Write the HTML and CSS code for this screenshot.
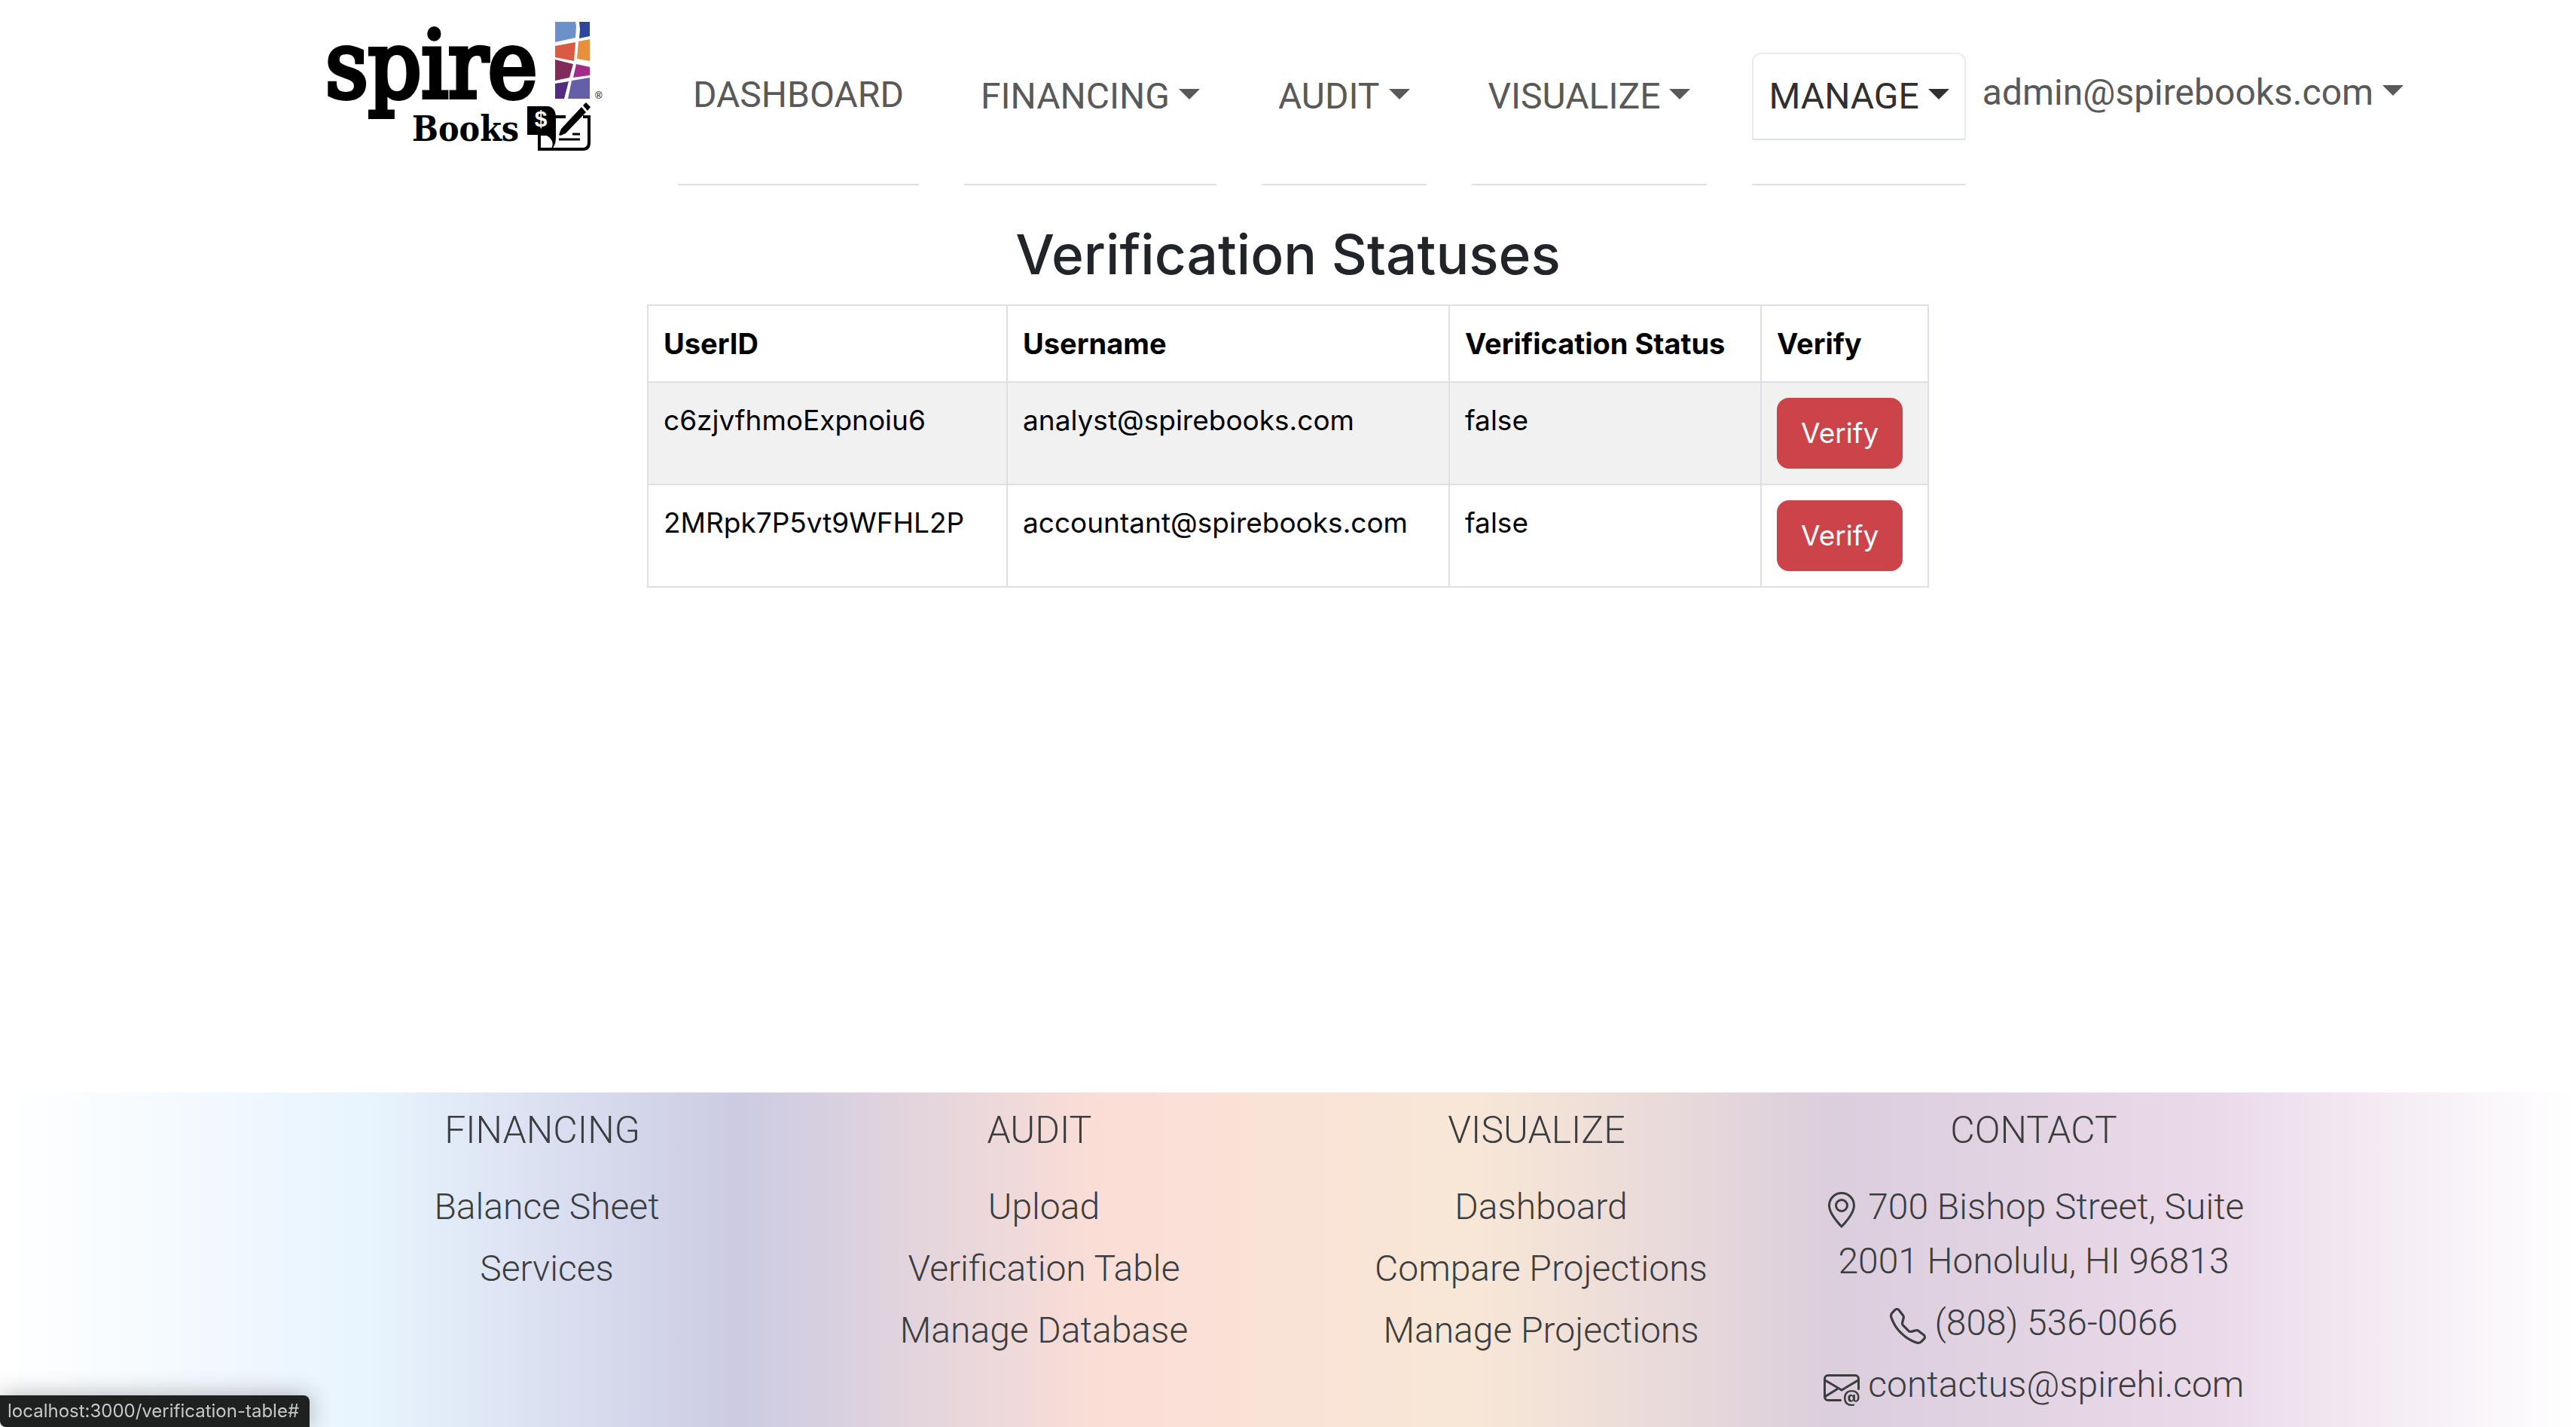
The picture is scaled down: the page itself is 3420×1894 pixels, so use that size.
FILE: index.html
```html
<!DOCTYPE html>
<html lang="en">
<head>
<meta charset="utf-8">
<title>Spire Books</title>
<link rel="stylesheet" href="styles.css">
</head>
<body>
<header class="header">
  <a class="logo" href="#" aria-label="Spire Books">
    <svg class="logo-art" viewBox="0 0 370 180">
      <text class="logo-spire" x="-4" y="104">spire</text>
      <text class="logo-books" x="111" y="162">Books</text>
      <text class="logo-reg" x="354" y="106">®</text>
      <path fill="#6c90c8" d="M301 4h27l1 6-1 15-27 6z"/>
      <path fill="#2a4799" d="M333 4h14v19l-14 3 1-12z"/>
      <path fill="#d95b41" d="M301 36l27-5-2 25-25-5z"/>
      <path fill="#e88f3e" d="M332 30l15-3v29l-17-3z"/>
      <path fill="#802b5c" d="M301 54l24 6-5 18-19 4z"/>
      <path fill="#a22a88" d="M329 60l18 4v11l-22 3z"/>
      <path fill="#542c7f" d="M301 86l18-3-6 23h-12z"/>
      <path fill="#645fa8" d="M323 82l24-4v28h-29z"/>
      <path fill="#000" d="M264 116h26c9 0 12 7 12 15v26c0 12-5 18-13 18h-11v-21h-14z"/>
      <path fill="#fff" d="M281 155h9q10 6 7 15-2 4-7 3h-9z"/>
      <path fill="none" stroke="#000" stroke-width="4" d="M301 130h14M338 130h8v34q0 9-8 9h-58v-19"/>
      <path stroke="#000" stroke-width="3" d="M306 160h28M324 153h10"/>
      <path fill="#000" d="M306 154l3-8 27-29 6 7-27 28-7 3zM338 115l4-4 6 6-4 5z"/>
      <text class="logo-dollar" x="282" y="143">$</text>
    </svg>
  </a>
  <nav class="tabs">
    <div class="tab"><a class="tab-link" href="#">DASHBOARD</a></div>
    <div class="tab"><a class="tab-link drop" href="#">FINANCING</a></div>
    <div class="tab"><a class="tab-link drop" href="#">AUDIT</a></div>
    <div class="tab"><a class="tab-link drop" href="#">VISUALIZE</a></div>
    <div class="tab"><a class="tab-link drop active" href="#">MANAGE</a></div>
  </nav>
  <a class="account drop" href="#">admin@spirebooks.com</a>
</header>
<main class="main">
  <h1 class="title">Verification Statuses</h1>
  <table class="table">
    <colgroup><col class="col-id"><col class="col-name"><col class="col-status"><col class="col-verify"></colgroup>
    <thead>
      <tr><th>UserID</th><th>Username</th><th>Verification Status</th><th>Verify</th></tr>
    </thead>
    <tbody>
      <tr><td>c6zjvfhmoExpnoiu6</td><td>analyst@spirebooks.com</td><td>false</td><td><button class="btn" type="button">Verify</button></td></tr>
      <tr><td>2MRpk7P5vt9WFHL2P</td><td>accountant@spirebooks.com</td><td>false</td><td><button class="btn" type="button">Verify</button></td></tr>
    </tbody>
  </table>
</main>
<footer class="footer">
  <div class="footer-grid">
    <section class="footer-col">
      <h2 class="footer-head">FINANCING</h2>
      <a class="footer-link" href="#">Balance Sheet</a>
      <a class="footer-link" href="#">Services</a>
    </section>
    <section class="footer-col">
      <h2 class="footer-head">AUDIT</h2>
      <a class="footer-link" href="#">Upload</a>
      <a class="footer-link" href="#">Verification Table</a>
      <a class="footer-link" href="#">Manage Database</a>
    </section>
    <section class="footer-col">
      <h2 class="footer-head">VISUALIZE</h2>
      <a class="footer-link" href="#">Dashboard</a>
      <a class="footer-link" href="#">Compare Projections</a>
      <a class="footer-link" href="#">Manage Projections</a>
    </section>
    <section class="footer-col">
      <h2 class="footer-head">CONTACT</h2>
      <a href="#"><svg class="icon" viewBox="0 0 16 16"><path d="M12.166 8.94c-.524 1.062-1.234 2.12-1.96 3.07A32 32 0 0 1 8 14.58a32 32 0 0 1-2.206-2.57c-.726-.95-1.436-2.008-1.96-3.07C3.304 7.867 3 6.862 3 6a5 5 0 0 1 10 0c0 .862-.305 1.867-.834 2.94M8 16s6-5.686 6-10A6 6 0 0 0 2 6c0 4.314 6 10 6 10"/><path d="M8 8a2 2 0 1 1 0-4 2 2 0 0 1 0 4m0 1a3 3 0 1 0 0-6 3 3 0 0 0 0 6"/></svg> 700 Bishop Street, Suite<br>2001 Honolulu, HI 96813</a>
      <a href="#"><svg class="icon" viewBox="0 0 16 16"><path d="M3.654 1.328a.678.678 0 0 0-1.015-.063L1.605 2.3c-.483.484-.661 1.169-.45 1.77a17.6 17.6 0 0 0 4.168 6.608 17.6 17.6 0 0 0 6.608 4.168c.601.211 1.286.033 1.77-.45l1.034-1.034a.678.678 0 0 0-.063-1.015l-2.307-1.794a.68.68 0 0 0-.58-.122l-2.19.547a1.75 1.75 0 0 1-1.657-.459L5.482 8.062a1.75 1.75 0 0 1-.46-1.657l.548-2.19a.68.68 0 0 0-.122-.58zM1.884.511a1.745 1.745 0 0 1 2.612.163L6.29 2.98c.329.423.445.974.315 1.494l-.547 2.19a.68.68 0 0 0 .178.643l2.457 2.457a.68.68 0 0 0 .644.178l2.189-.547a1.75 1.75 0 0 1 1.494.315l2.306 1.794c.829.645.905 1.87.163 2.611l-1.034 1.034c-.74.74-1.846 1.065-2.877.702a18.6 18.6 0 0 1-7.01-4.42 18.6 18.6 0 0 1-4.42-7.009c-.362-1.03-.037-2.137.703-2.877z"/></svg> (808) 536-0066</a>
      <a href="#"><svg class="icon" viewBox="0 0 16 16"><path d="M2 2a2 2 0 0 0-2 2v8.01A2 2 0 0 0 2 14h5.5a.5.5 0 0 0 0-1H2a1 1 0 0 1-.966-.741l5.64-3.471L8 9.583l7-4.2V8.5a.5.5 0 0 0 1 0V4a2 2 0 0 0-2-2zm3.708 6.208L1 11.105V5.383zM1 4.217V4a1 1 0 0 1 1-1h12a1 1 0 0 1 1 1v.217l-7 4.2z"/><path d="M14.247 14.269c1.01 0 1.587-.857 1.587-2.025v-.21C15.834 10.43 14.64 9 12.52 9h-.035C10.42 9 9 10.36 9 12.432v.214C9 14.82 10.438 16 12.358 16h.044c.594 0 1.018-.074 1.237-.175v-.73c-.245.11-.673.18-1.18.18h-.044c-1.334 0-2.571-.788-2.571-2.655v-.157c0-1.657 1.058-2.724 2.64-2.724h.04c1.535 0 2.484 1.05 2.484 2.326v.118c0 .975-.324 1.39-.639 1.39-.232 0-.41-.148-.41-.42v-2.19h-.906v.569h-.03c-.084-.298-.368-.63-.954-.63-.778 0-1.259.555-1.259 1.4v.528c0 .892.49 1.434 1.26 1.434.471 0 .896-.227 1.014-.643h.043c.118.42.617.648 1.12.648m-2.453-1.588v-.227c0-.546.227-.791.573-.791.297 0 .572.192.572.708v.367c0 .573-.253.744-.564.744-.354 0-.581-.215-.581-.8Z"/></svg> contactus@spirehi.com</a>
    </section>
  </div>
</footer>
<div class="status">localhost:3000/verification-table#</div>
</body>
</html>
```
FILE: styles.css
```css
* { box-sizing: border-box; }
body {
  margin: 0;
  min-height: 100vh;
  display: flex;
  flex-direction: column;
  background: #fff;
  color: #212529;
  font-family: Inter, "Liberation Sans", sans-serif;
  font-size: 37px;
  line-height: 60px;
}
a { color: inherit; text-decoration: none; }

/* header */
.header {
  display: flex;
  align-items: flex-start;
  padding: 0 220px 0 436px;
  height: 246px;
  font-family: Roboto, sans-serif;
  font-size: 48px;
  line-height: 72px;
  color: #595959;
}
.logo { flex: none; margin: 25px 94px 0 0; }
.logo-art { display: block; width: 370px; height: 180px; overflow: visible; }
.logo-spire {
  font: 123px "DejaVu Serif Condensed", "DejaVu Serif", serif;
  fill: #000;
  stroke: #000;
  stroke-width: 6px;
}
.logo-books { font: bold 46px "DejaVu Serif Condensed", "DejaVu Serif", serif; }
.logo-reg { font: 13px "Liberation Sans", sans-serif; }
.logo-dollar { font: bold 30px "Liberation Sans", sans-serif; fill: #fff; text-anchor: middle; }
.tabs { display: flex; gap: 60px; align-self: stretch; }
.tab { border-bottom: 2px solid #dcdfe5; padding-top: 70px; }
.tab-link {
  display: block;
  padding: 18px 18px 22px;
  border: 2px solid transparent;
}
.tab-link.drop { padding: 20px; }
.tab-link.active {
  color: #303030;
  border-color: #e9ebee #e9ebee #dcdfe5;
  border-radius: 12px 12px 0 0;
}
.drop { white-space: nowrap; }
.drop::after {
  content: "";
  display: inline-block;
  margin-left: 12px;
  vertical-align: 12px;
  border: 14px solid transparent;
  border-top-color: currentColor;
  border-bottom: 0;
}
.account { margin: 87px 0 0 22px; }

/* verification table */
.main { flex: 1; display: flex; flex-direction: column; align-items: center; padding-top: 44px; }
.title { margin: 0 0 18px; font-size: 73px; line-height: 96px; font-weight: 500; }
.table { border-collapse: collapse; table-layout: fixed; width: 1700px; color: #000; }
.col-id { width: 477px; }
.col-name { width: 587px; }
.col-status { width: 414px; }
.col-verify { width: 222px; }
.table th, .table td {
  border: 2px solid #dcdfe5;
  padding: 20px;
  text-align: left;
  vertical-align: top;
  white-space: nowrap;
}
.table th { font-size: 38px; }
.table tbody tr:nth-child(odd) { background: #f1f1f1; }
.btn {
  display: block;
  padding: 17px 32px;
  border: 0;
  border-radius: 16px;
  background: #cb444a;
  color: #fff;
  font: inherit;
}

/* footer */
.footer {
  padding: 14px 390px 20px;
  background: linear-gradient(90deg, #fff, #e8f4fe, #cccbe3, #fbded6, #f8e7d6, #dbcedd, #ead9e9, #fff);
  color: #3b3d3e;
  font-family: Roboto, sans-serif;
  font-weight: 300;
  font-size: 48px;
  line-height: 72px;
  text-align: center;
}
.footer-grid { display: grid; grid-template-columns: repeat(4, 1fr); }
.footer-col { display: flex; flex-direction: column; gap: 10px; }
.footer-head { margin: 0 0 20px; font: inherit; font-size: 50px; }
.footer-link { padding-left: 12px; }
.icon { width: 48px; height: 48px; vertical-align: -12px; fill: currentColor; }

/* link preview at the window's corner */
.status {
  position: fixed;
  left: 0;
  bottom: 0;
  padding: 0 14px 0 10px;
  border-radius: 0 8px 0 8px;
  background: #1f2121;
  color: #c7c8c8;
  font-size: 24px;
  line-height: 42px;
  box-shadow: 0 0 32px rgba(0, 0, 0, 0.3);
}
```
